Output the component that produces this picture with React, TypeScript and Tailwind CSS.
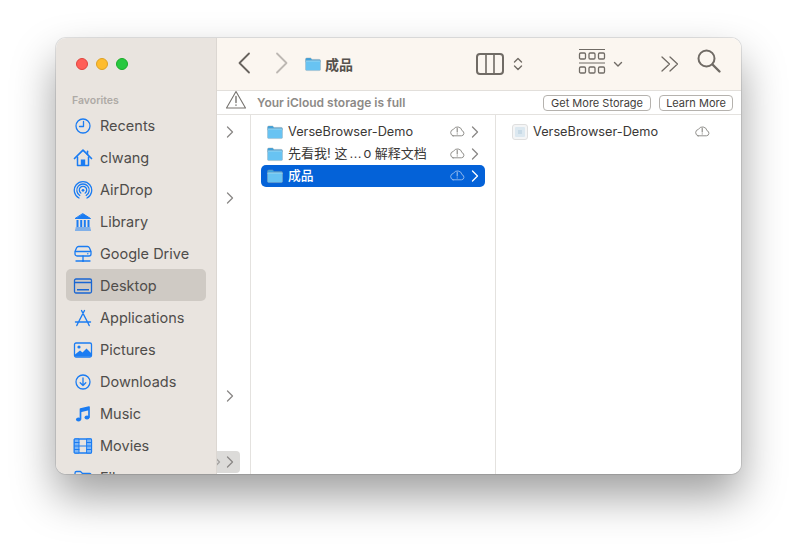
import { ReactNode } from 'react';

const BLUE = '#1b7cf2';

function Icon({ children }: { children: ReactNode }) {
  return (
    <svg width="20" height="20" viewBox="0 0 20 20" fill="none" stroke={BLUE} strokeWidth="1.3" strokeLinecap="round" strokeLinejoin="round">
      {children}
    </svg>
  );
}

const sidebarItems: { label: string; active?: boolean; icon: ReactNode }[] = [
  {
    label: 'Recents',
    icon: (
      <Icon>
        <circle cx="10" cy="10" r="7" />
        <path d="M10.5 5.5V10.5H6.5" />
      </Icon>
    ),
  },
  {
    label: 'clwang',
    icon: (
      <Icon>
        <path d="M1.5 10.5L10 2.2L18.5 10.5" strokeWidth="1.7" />
        <path d="M4.5 9V17.5H15.5V9" strokeWidth="1.5" />
        <path d="M7.8 17.5V11.5H12.2V17.5Z" fill={BLUE} stroke="none" />
        <path d="M14.5 3.2V6.5" strokeWidth="1.5" />
      </Icon>
    ),
  },
  {
    label: 'AirDrop',
    icon: (
      <Icon>
        <path d="M6 18A8.7 8.7 0 1 1 14 18" />
        <path d="M6.8 15.5A6.2 6.2 0 1 1 13.2 15.5" />
        <path d="M7.8 13A3.7 3.7 0 1 1 12.2 13" />
        <circle cx="10" cy="10.3" r="1.4" fill={BLUE} stroke="none" />
      </Icon>
    ),
  },
  {
    label: 'Library',
    icon: (
      <Icon>
        <path d="M10 1.8L17.5 6.5H2.5Z" fill={BLUE} strokeWidth="1" />
        <path d="M4.5 8V15M8.2 8V15M11.8 8V15M15.5 8V15" strokeWidth="2" strokeLinecap="butt" />
        <path d="M3 16H17M2.5 18H17.5" strokeWidth="1.2" />
      </Icon>
    ),
  },
  {
    label: 'Google Drive',
    icon: (
      <Icon>
        <path d="M5.5 2.5H14.5C15.5 2.5 16 3 16.4 3.8L18 7.5V10A2 2 0 0 1 16 12H4A2 2 0 0 1 2 10V7.5L3.6 3.8C4 3 4.5 2.5 5.5 2.5Z" />
        <path d="M2.5 7.5H17.5" />
        <path d="M10 12V17M3 17H17" />
        <circle cx="10" cy="17" r="1.1" fill={BLUE} stroke="none" />
        <circle cx="14.8" cy="9.8" r="0.7" fill={BLUE} stroke="none" />
      </Icon>
    ),
  },
  {
    label: 'Desktop',
    active: true,
    icon: (
      <svg width="20" height="20" viewBox="0 0 20 20" fill="none" stroke="#1a66d2" strokeWidth="1.3">
        <rect x="1.5" y="3" width="17" height="14" rx="1.5" />
        <path d="M1.5 6.5H18.5" />
        <path d="M4 13.8H16" strokeWidth="1.6" />
      </svg>
    ),
  },
  {
    label: 'Applications',
    icon: (
      <Icon>
        <path d="M8.5 2.5L15 15M11.5 2.5L5 15M2.5 14H17.5M5 15L3.8 17.5M15 15L16.2 17.5" strokeWidth="1.4" />
      </Icon>
    ),
  },
  {
    label: 'Pictures',
    icon: (
      <Icon>
        <rect x="1.5" y="3" width="17" height="14" rx="1.5" />
        <circle cx="6" cy="7" r="1.6" fill={BLUE} stroke="none" />
        <path d="M2 16.5V14.5L7 10.5L9.5 12.5L13.5 8.5L18 13V16.5Z" fill={BLUE} stroke="none" />
      </Icon>
    ),
  },
  {
    label: 'Downloads',
    icon: (
      <Icon>
        <circle cx="10" cy="10" r="7" />
        <path d="M10 6V13.5M7.2 10.8L10 13.5L12.8 10.8" />
      </Icon>
    ),
  },
  {
    label: 'Music',
    icon: (
      <Icon>
        <path d="M7.5 15V5L16 3V13" strokeWidth="1.7" />
        <path d="M7.5 5L16 3V6.2L7.5 8.2Z" fill={BLUE} stroke="none" />
        <ellipse cx="5.5" cy="15.5" rx="2.5" ry="2" fill={BLUE} stroke="none" />
        <ellipse cx="14" cy="13.5" rx="2.5" ry="2" fill={BLUE} stroke="none" />
      </Icon>
    ),
  },
  {
    label: 'Movies',
    icon: (
      <Icon>
        <rect x="1.5" y="3" width="17" height="14" rx="1" />
        <path d="M1.5 3H6V17H1.5ZM14 3H18.5V17H14Z" fill="#7db6f7" strokeWidth="1" />
        <path d="M6 10H14M1.5 6.5H6M1.5 10H6M1.5 13.5H6M14 6.5H18.5M14 10H18.5M14 13.5H18.5" strokeWidth="1.1" />
      </Icon>
    ),
  },
  {
    label: 'Files',
    icon: (
      <Icon>
        <path d="M2 16V5A1.5 1.5 0 0 1 3.5 3.5H7.5L9.5 5.5H16.5A1.5 1.5 0 0 1 18 7V16Z" />
      </Icon>
    ),
  },
];

function Folder({ size = 16 }: { size?: number }) {
  return (
    <svg width={size} height={size} viewBox="0 0 16 16" className="shrink-0">
      <path d="M0.5 3.4A1.4 1.4 0 0 1 1.9 2H5.6L7 3.4H14.1A1.4 1.4 0 0 1 15.5 4.8V6H0.5Z" fill="#3ea2dc" stroke="#8f9ca5" strokeWidth="0.4" />
      <rect x="0.5" y="4.6" width="15" height="10" rx="1.3" fill="#68c3f2" stroke="#9aa9b2" strokeWidth="0.4" />
      <path d="M0.5 5.2H15.5" stroke="#a5def8" strokeWidth="0.6" />
    </svg>
  );
}

function Chevron({ color = '#8a8886', className = '' }: { color?: string; className?: string }) {
  return (
    <svg width="8" height="12" viewBox="0 0 8 12" fill="none" stroke={color} strokeWidth="1.3" strokeLinecap="round" strokeLinejoin="round" className={`shrink-0 ${className}`}>
      <path d="M1.5 1L6.5 6L1.5 11" />
    </svg>
  );
}

function CloudAlert({ color = '#85837f' }: { color?: string }) {
  return (
    <svg width="16" height="12" viewBox="0 0 16 12" fill="none" stroke={color} strokeWidth="0.9" strokeLinejoin="round" strokeLinecap="round" className="mb-[3px] shrink-0">
      <path d="M4 10.8H12.4A2.6 2.6 0 0 0 13 5.7A4.6 4.6 0 0 0 4.4 4.4A3.3 3.3 0 0 0 4 10.8Z" />
      <path d="M8.2 3.4V7M8.2 8.9V9" strokeWidth="1.1" />
    </svg>
  );
}

function FileRow({ name, selected }: { name: ReactNode; selected?: boolean }) {
  return (
    <div className={`flex h-[22px] items-center rounded-[5px] px-[6px] ${selected ? 'bg-[#0462d8]' : ''}`}>
      <Folder />
      <span className={`ml-[5px] flex-1 truncate text-[12.75px] ${selected ? 'font-medium text-white' : 'text-[#3a3836]'}`}>{name}</span>
      <CloudAlert color={selected ? '#9dc0ee' : '#85837f'} />
      <Chevron color={selected ? '#ffffff' : '#8a8886'} className="ml-[6px]" />
    </div>
  );
}

export default function App() {
  return (
    <div
      className="h-[548px] w-[797px] overflow-hidden bg-white pl-[56px] pt-[38px]"
      style={{ fontFamily: "Inter, 'Noto Sans CJK SC', sans-serif" }}
    >
      <div className="flex h-[436px] w-[685px] overflow-hidden rounded-[10px] shadow-[0_0_0_1px_rgba(0,0,0,0.1),0_22px_44px_rgba(0,0,0,0.38)]">
        {/* sidebar */}
        <div className="w-[161px] shrink-0 overflow-hidden border-r border-[#dcd7d2] bg-[#e9e4df]">
          <div className="flex gap-2 pl-[20px] pt-[20px]">
            <span className="h-3 w-3 rounded-full border-[0.5px] border-[#e0443e] bg-[#ff5f57]" />
            <span className="h-3 w-3 rounded-full border-[0.5px] border-[#dea123] bg-[#febc2e]" />
            <span className="h-3 w-3 rounded-full border-[0.5px] border-[#1aab29] bg-[#28c840]" />
          </div>
          <div className="pl-[16px] pt-[24px] text-[10.5px] font-semibold leading-[14px] text-[#aeaaa6]">Favorites</div>
          <div className="px-[10px] pt-[1px]">
            {sidebarItems.map(item => (
              <div key={item.label} className={`flex h-[32px] items-center rounded-[5px] pl-[7px] pt-[2px] ${item.active ? 'bg-[#cfcac4]' : ''}`}>
                <span className="flex w-[20px] justify-center">{item.icon}</span>
                <span className="ml-[7px] text-[14.5px] text-[#4f4d4b]">{item.label}</span>
              </div>
            ))}
          </div>
        </div>

        {/* main */}
        <div className="flex min-w-0 flex-1 flex-col bg-white">
          <div className="flex h-[53px] shrink-0 items-center border-b border-[#e2dfdb] bg-[#fbf6f0]">
            <svg width="14" height="22" viewBox="0 0 14 22" fill="none" stroke="#68635e" strokeWidth="1.8" strokeLinecap="round" strokeLinejoin="round" className="ml-[20px] mb-[3px]">
              <path d="M12 1.5L2.5 11L12 20.5" />
            </svg>
            <svg width="14" height="22" viewBox="0 0 14 22" fill="none" stroke="#bdb8b3" strokeWidth="1.8" strokeLinecap="round" strokeLinejoin="round" className="ml-[24px] mb-[3px]">
              <path d="M2 1.5L11.5 11L2 20.5" />
            </svg>
            <span className="ml-[16px]"><Folder /></span>
            <span className="ml-[4px] text-[14px] font-semibold text-[#55514d]">成品</span>
            <svg width="30" height="24" viewBox="0 0 30 24" fill="none" stroke="#706b65" strokeWidth="2" className="ml-[122px]">
              <rect x="2" y="2" width="26" height="20" rx="3" />
              <path d="M11 2V22M19 2V22" strokeWidth="1.6" />
            </svg>
            <svg width="10" height="16" viewBox="0 0 10 16" fill="none" stroke="#706b65" strokeWidth="1.4" strokeLinecap="round" strokeLinejoin="round" className="ml-[8px]">
              <path d="M1.5 6L5 2.5L8.5 6M1.5 10L5 13.5L8.5 10" />
            </svg>
            <svg width="28" height="28" viewBox="0 0 28 28" fill="none" stroke="#706b65" className="ml-[55px] mb-[4px]">
              <path d="M1 1.5H27M1 15H27" strokeWidth="1.2" />
              <rect x="1.5" y="5" width="6" height="6" rx="1.2" strokeWidth="1.3" />
              <rect x="11" y="5" width="6" height="6" rx="1.2" strokeWidth="1.3" />
              <rect x="20.5" y="5" width="6" height="6" rx="1.2" strokeWidth="1.3" />
              <rect x="1.5" y="19" width="6" height="6" rx="1.2" strokeWidth="1.3" />
              <rect x="11" y="19" width="6" height="6" rx="1.2" strokeWidth="1.3" />
              <rect x="20.5" y="19" width="6" height="6" rx="1.2" strokeWidth="1.3" />
            </svg>
            <svg width="10" height="7" viewBox="0 0 10 7" fill="none" stroke="#706b65" strokeWidth="1.4" strokeLinecap="round" strokeLinejoin="round" className="ml-[7px]">
              <path d="M1.5 1.5L5 5L8.5 1.5" />
            </svg>
            <svg width="20" height="18" viewBox="0 0 20 18" fill="none" stroke="#706b65" strokeWidth="1.3" strokeLinecap="round" strokeLinejoin="round" className="ml-[37px]">
              <path d="M2 2L9.5 9L2 16M10 2L17.5 9L10 16" />
            </svg>
            <svg width="26" height="26" viewBox="0 0 26 26" fill="none" stroke="#706b65" strokeWidth="2" strokeLinecap="round" className="ml-[16px] mb-[7px]">
              <circle cx="10.5" cy="10.5" r="8" />
              <path d="M16.5 16.5L23.5 23.5" strokeWidth="2.4" />
            </svg>
          </div>

          {/* icloud banner */}
          <div className="flex h-[24px] shrink-0 items-center border-b border-[#e4e2df] pr-[8px]">
            <svg width="22" height="20" viewBox="0 0 22 20" fill="none" stroke="#76736f" strokeWidth="1.1" strokeLinejoin="round" strokeLinecap="round" className="ml-[8px] mb-[5px]">
              <path d="M11 1.5L20.5 18H1.5Z" />
              <path d="M11 6.5V12.5M11 15V15.2" strokeWidth="1.4" />
            </svg>
            <span className="ml-[10px] flex-1 pt-[1px] text-[12px] font-semibold text-[#8d8a87]">Your iCloud storage is full</span>
            <span className="flex h-[16px] w-[108px] items-center justify-center rounded-[4px] border border-[#b5b2ae] pt-[1px] text-[11px] text-[#3f3d3b]">Get More Storage</span>
            <span className="ml-[8px] flex h-[16px] w-[74px] items-center justify-center rounded-[4px] border border-[#b5b2ae] pt-[1px] text-[11px] text-[#3f3d3b]">Learn More</span>
          </div>

          {/* columns */}
          <div className="flex min-h-0 flex-1">
            <div className="relative flex w-[34px] shrink-0 flex-col border-r border-[#e4e2df] pl-[9px]">
              <Chevron className="mt-[11px]" />
              <Chevron className="mt-[54px]" />
              <Chevron className="mt-[186px]" />
              <div className="absolute bottom-[1px] left-0 flex h-[22px] w-[23px] items-center overflow-hidden rounded-r-[4px] bg-[#dcdbd9]">
                <Chevron color="#a5a3a0" className="-ml-[4px]" />
                <Chevron className="ml-[5px]" />
              </div>
            </div>
            <div className="w-[245px] shrink-0 border-r border-[#e4e2df] px-[10px] pt-[6px]">
              <FileRow name="VerseBrowser-Demo" />
              <FileRow
                name={
                  <span className="text-[13px]">
                    先看我! 这<span className="px-[1.5px] font-['Liberation_Sans']">…</span>o 解释文档
                  </span>
                }
              />
              <FileRow name="成品" selected />
            </div>
            <div className="flex-1 pl-[16px] pt-[6px]">
              <div className="flex h-[22px] items-center">
                <span className="flex h-[16px] w-[16px] items-center justify-center rounded-[3px] border border-[#dfdfdf] bg-[#f4f5f6]">
                  <span className="flex h-[10px] w-[10px] items-center justify-center rounded-[1px] bg-[#dce8f0]">
                    <span className="h-[4px] w-[4px] bg-[#c8dae6]" />
                  </span>
                </span>
                <span className="ml-[5px] w-[161px] text-[12.75px] text-[#3a3836]">VerseBrowser-Demo</span>
                <CloudAlert />
              </div>
            </div>
          </div>
        </div>
      </div>
    </div>
  );
}
